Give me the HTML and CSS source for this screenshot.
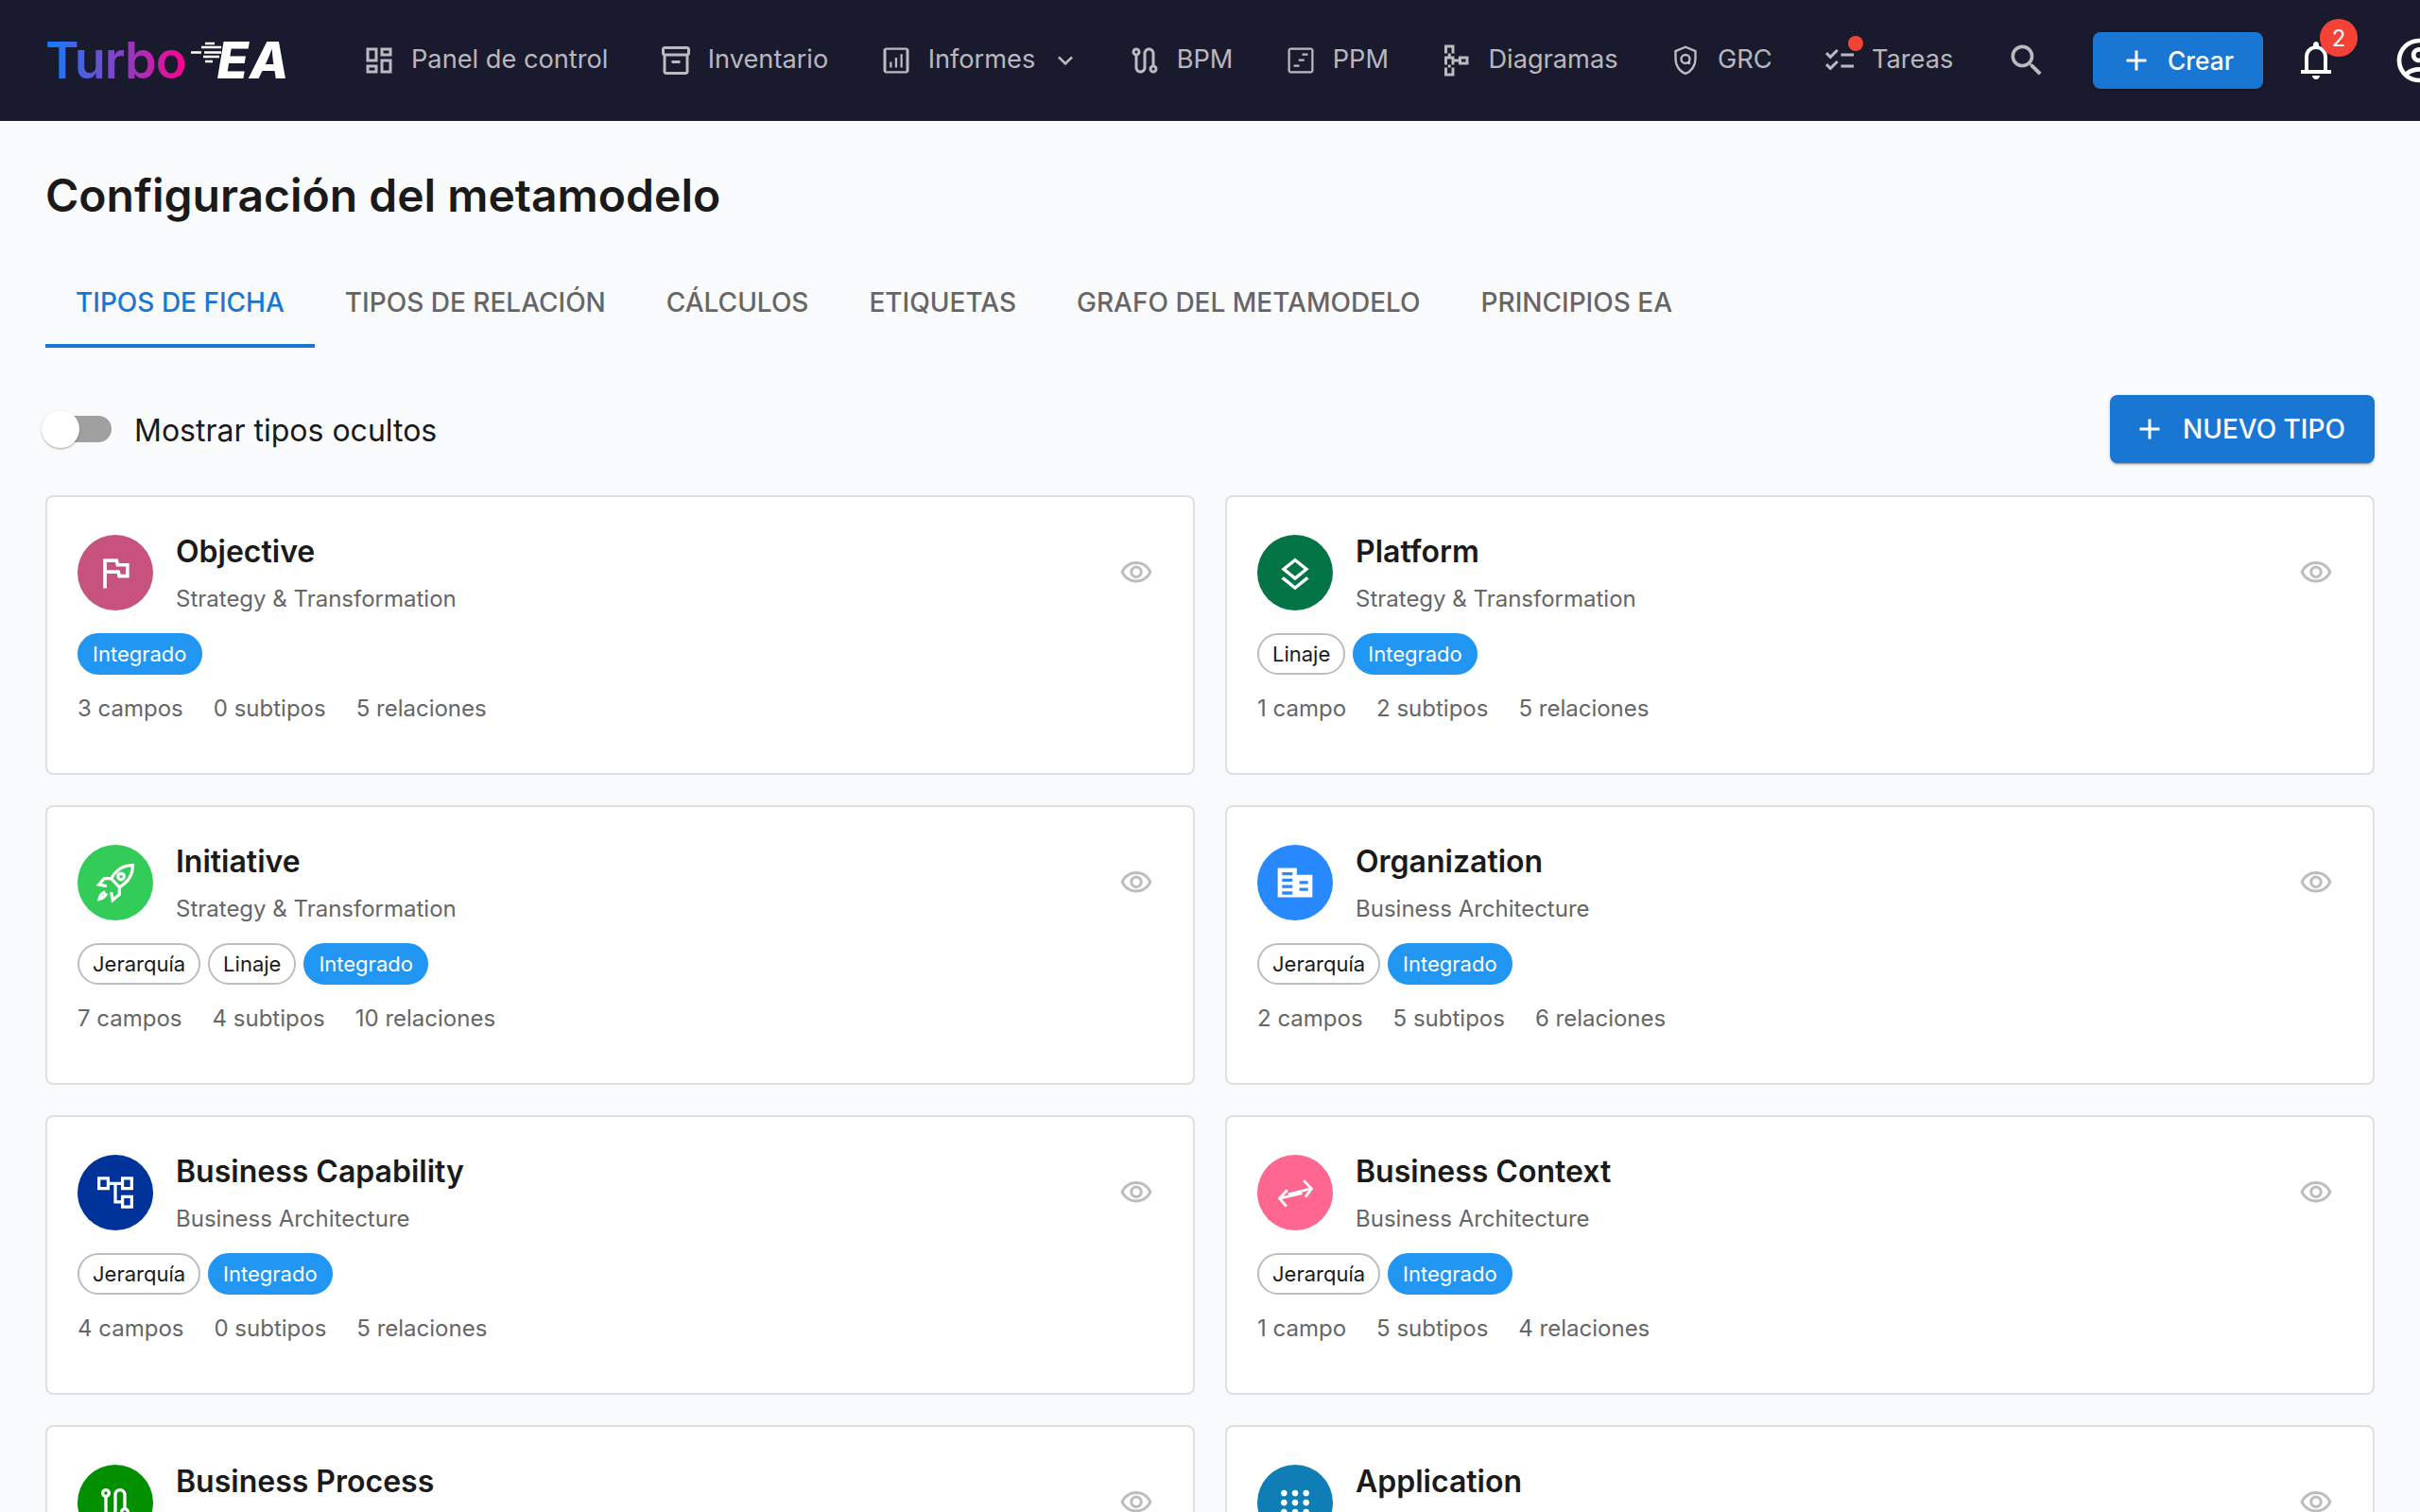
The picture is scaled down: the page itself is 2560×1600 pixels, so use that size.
FILE: index.html
```html
<!DOCTYPE html>
<html lang="es">

<head>
  <meta charset="UTF-8">
  <meta name="viewport" content="width=device-width, initial-scale=1.0">
  <title>Turbo EA - Configuración del metamodelo</title>
  <link rel="stylesheet" href="styles.css">
</head>

<body>
  <header class="topbar">
    <div class="logo">
      <span class="logo-turbo">Turbo</span>
      <span class="logo-ea">
        <svg class="logo-lines" viewBox="0 0 40 40">
          <path d="M15 3h10M11 7h21M0 12.500h11M14 12.500h18M13 17h17M15 22h8" />
        </svg>
        <span class="logo-ea-text">EA</span>
      </span>
    </div>
    <nav class="main-nav">
      <a class="nav-item">
        <svg class="nav-icon" viewBox="0 0 24 24"><path d="M19 5v2h-4V5h4M9 5v6H5V5h4m10 8v6h-4v-6h4M9 17v2H5v-2h4M21 3h-8v6h8V3zM11 3H3v10h8V3zm10 8h-8v10h8V11zm-10 4H3v6h8v-6z" /></svg>
        <span class="nav-label">Panel de control</span>
      </a>
      <a class="nav-item">
        <svg class="nav-icon" viewBox="0 0 24 24"><path d="M20 2H4c-1 0-2 .9-2 2v3.010c0 .72.43 1.340 1 1.690V20c0 1.100 1.100 2 2 2h14c.9 0 2-.9 2-2V8.700c.57-.35 1-.97 1-1.690V4c0-1.100-1-2-2-2zm-1 18H5V9h14v11zm1-13H4V4h16v3zM9 12h6v2H9z" /></svg>
        <span class="nav-label">Inventario</span>
      </a>
      <a class="nav-item nav-item-menu">
        <svg class="nav-icon" viewBox="0 0 24 24"><path d="M19 3H5c-1.100 0-2 .9-2 2v14c0 1.100.9 2 2 2h14c1.100 0 2-.9 2-2V5c0-1.100-.9-2-2-2zm0 16.500H5V4.500h14zM7.500 13H9v4H7.500zM11.200 10h1.500v7h-1.500zM15 7.500h1.500V17H15z" /></svg>
        <span class="nav-label">Informes</span>
        <svg class="nav-chevron" viewBox="0 0 24 24"><path d="M16.590 8.590 12 13.170 7.410 8.590 6 10l6 6 6-6z" /></svg>
      </a>
      <a class="nav-item">
        <svg class="nav-icon" viewBox="0 0 24 24"><path d="M19 15.180V7c0-2.210-1.790-4-4-4s-4 1.790-4 4v10c0 1.100-.9 2-2 2s-2-.9-2-2V8.820C8.160 8.400 9 7.300 9 6c0-1.660-1.340-3-3-3S3 4.340 3 6c0 1.300.84 2.400 2 2.820V17c0 2.210 1.790 4 4 4s4-1.790 4-4V7c0-1.100.9-2 2-2s2 .9 2 2v8.180c-1.160.41-2 1.510-2 2.820 0 1.660 1.340 3 3 3s3-1.340 3-3c0-1.300-.84-2.400-2-2.820zM6 7c-.55 0-1-.45-1-1s.45-1 1-1 1 .45 1 1-.45 1-1 1zm12 12c-.55 0-1-.45-1-1s.45-1 1-1 1 .45 1 1-.45 1-1 1z" /></svg>
        <span class="nav-label">BPM</span>
      </a>
      <a class="nav-item">
        <svg class="nav-icon" viewBox="0 0 24 24"><path d="M19 3H5c-1.100 0-2 .9-2 2v14c0 1.100.9 2 2 2h14c1.100 0 2-.9 2-2V5c0-1.100-.9-2-2-2zm.5 16.500h-15v-15h15zM13 7h4v1.500h-4zM10.500 11h4v1.500h-4zM7 15h4v1.500H7z" /></svg>
        <span class="nav-label">PPM</span>
      </a>
      <a class="nav-item">
        <svg class="nav-icon" viewBox="0 0 24 24"><path d="M14 9v2h-3V9H8.500V7H11V1H4v6h2.500v2H4v6h2.500v2H4v6h7v-6H8.500v-2H11v-2h3v2h7V9h-7zM9 7H6V3h3v4zm0 8H6v-4h3v4zm0 6H6v-4h3v4zm10-8h-3v-2h3v2z" /></svg>
        <span class="nav-label">Diagramas</span>
      </a>
      <a class="nav-item">
        <svg class="nav-icon nav-icon-line" viewBox="0 0 24 24"><path d="M12 2.500 5 5.400V11c0 4.600 2.900 8.800 7 10.300 4.100-1.500 7-5.700 7-10.300V5.400zM15.200 14.500l-1.300-1.300" /><circle cx="12" cy="11" r="3" /></svg>
        <span class="nav-label">GRC</span>
      </a>
      <a class="nav-item nav-item-dot">
        <svg class="nav-icon" viewBox="0 0 24 24"><path d="M22 7h-9v2h9V7zm0 8h-9v2h9v-2zM5.540 11 2 7.460l1.410-1.410 2.120 2.120 4.240-4.240 1.410 1.410L5.540 11zm0 8L2 15.460l1.410-1.410 2.120 2.120 4.240-4.240 1.410 1.410L5.540 19z" /></svg>
        <span class="nav-label">Tareas</span>
      </a>
    </nav>
    <div class="topbar-actions">
      <svg class="search-icon" viewBox="0 0 24 24"><path d="M15.500 14h-.79l-.28-.27C15.410 12.590 16 11.110 16 9.500 16 5.910 13.090 3 9.500 3S3 5.910 3 9.500 5.910 16 9.500 16c1.610 0 3.090-.59 4.230-1.570l.27.28v.79l5 4.990L20.490 19l-4.990-5zm-6 0C7.010 14 5 11.990 5 9.500S7.010 5 9.500 5 14 7.010 14 9.500 11.990 14 9.500 14z" /></svg>
      <button class="create-button">
        <svg class="plus-icon" viewBox="0 0 24 24"><path d="M19 13h-6v6h-2v-6H5v-2h6V5h2v6h6v2z" /></svg>
        Crear
      </button>
      <div class="bell">
        <svg class="bell-icon" viewBox="0 0 24 24"><path d="M4 19v-2h2v-7q0-2.075 1.250-3.688T10.500 4.200v-.7q0-.625.438-1.062T12 2t1.062.438.438 1.062v.7q2 .5 3.250 2.112T18 10v7h2v2zm8 3q-.825 0-1.412-.587T10 20h4q0 .825-.587 1.413T12 22m-4-5h8v-7q0-1.650-1.175-2.825T12 6 9.175 7.175 8 10z" /></svg>
        <span class="bell-badge">2</span>
      </div>
      <svg class="avatar-icon" viewBox="0 0 24 24"><path d="M12 2C6.480 2 2 6.480 2 12s4.480 10 10 10 10-4.480 10-10S17.520 2 12 2zM7.350 18.500C8.660 17.560 10.260 17 12 17s3.340.56 4.650 1.500c-1.310.94-2.910 1.500-4.650 1.500s-3.340-.56-4.650-1.500zm10.790-1.380C16.450 15.800 14.320 15 12 15s-4.450.8-6.140 2.120C4.700 15.730 4 13.950 4 12c0-4.420 3.580-8 8-8s8 3.580 8 8c0 1.950-.7 3.730-1.860 5.120zM12 6c-1.930 0-3.500 1.570-3.500 3.500S10.070 13 12 13s3.500-1.570 3.500-3.500S13.930 6 12 6zm0 5c-.83 0-1.500-.67-1.500-1.500S11.170 8 12 8s1.500.67 1.500 1.500S12.830 11 12 11z" /></svg>
    </div>
  </header>

  <main class="page">
    <h1 class="page-title">Configuración del metamodelo</h1>

    <div class="tabs">
      <a class="tab tab-active">Tipos de ficha</a>
      <a class="tab">Tipos de relación</a>
      <a class="tab">Cálculos</a>
      <a class="tab">Etiquetas</a>
      <a class="tab">Grafo del metamodelo</a>
      <a class="tab">Principios EA</a>
    </div>

    <div class="toolbar">
      <label class="switch-label">
        <span class="switch"><span class="switch-thumb"></span></span>
        <span class="switch-text">Mostrar tipos ocultos</span>
      </label>
      <button class="new-button">
        <svg class="plus-icon" viewBox="0 0 24 24"><path d="M19 13h-6v6h-2v-6H5v-2h6V5h2v6h6v2z" /></svg>
        Nuevo tipo
      </button>
    </div>

    <div class="card-grid">
      <article class="type-card">
        <div class="card-head">
          <span class="type-icon icon-objective">
            <svg viewBox="0 0 24 24"><path d="M5 21V4h8.500l.6 2.500H20V15h-6.500l-.6-2.500H7V21zM7 10.500h7.500l.6 2.500H18V8.500h-5.500L12 6H7z" /></svg>
          </span>
          <div class="card-title">
            <h2>Objective</h2>
            <p>Strategy &amp; Transformation</p>
          </div>
          <svg class="eye-icon" viewBox="0 0 24 24"><path d="M12 6c3.790 0 7.170 2.130 8.820 5.500C19.170 14.870 15.790 17 12 17s-7.170-2.130-8.820-5.500C4.830 8.130 8.210 6 12 6m0-2C7 4 2.730 7.110 1 11.500 2.730 15.890 7 19 12 19s9.270-3.110 11-7.500C21.270 7.110 17 4 12 4zm0 5c1.380 0 2.500 1.120 2.500 2.500S13.380 14 12 14s-2.500-1.120-2.500-2.500S10.620 9 12 9m0-2c-2.480 0-4.500 2.020-4.500 4.500S9.520 16 12 16s4.500-2.020 4.500-4.500S14.480 7 12 7z" /></svg>
        </div>
        <div class="chips"><span class="chip chip-blue">Integrado</span></div>
        <div class="stats"><span>3 campos</span><span>0 subtipos</span><span>5 relaciones</span></div>
      </article>

      <article class="type-card">
        <div class="card-head">
          <span class="type-icon icon-platform">
            <svg viewBox="0 0 24 24"><path d="M12 3.500 20 10l-8 6.500L4 10zM6.900 10l5.100 4.100 5.100-4.100L12 5.900zM5.500 14.300 12 19.600l6.500-5.300 1.500 1.200-8 6.500-8-6.500z" /></svg>
          </span>
          <div class="card-title">
            <h2>Platform</h2>
            <p>Strategy &amp; Transformation</p>
          </div>
          <svg class="eye-icon" viewBox="0 0 24 24"><path d="M12 6c3.790 0 7.170 2.130 8.820 5.500C19.170 14.870 15.790 17 12 17s-7.170-2.130-8.820-5.500C4.830 8.130 8.210 6 12 6m0-2C7 4 2.730 7.110 1 11.500 2.730 15.890 7 19 12 19s9.270-3.110 11-7.500C21.270 7.110 17 4 12 4zm0 5c1.380 0 2.500 1.120 2.500 2.500S13.380 14 12 14s-2.500-1.120-2.500-2.500S10.620 9 12 9m0-2c-2.480 0-4.500 2.020-4.500 4.500S9.520 16 12 16s4.500-2.020 4.500-4.500S14.480 7 12 7z" /></svg>
        </div>
        <div class="chips"><span class="chip">Linaje</span><span class="chip chip-blue">Integrado</span></div>
        <div class="stats"><span>1 campo</span><span>2 subtipos</span><span>5 relaciones</span></div>
      </article>

      <article class="type-card">
        <div class="card-head">
          <span class="type-icon icon-initiative">
            <svg viewBox="0 0 24 24" class="line-art rocket"><path d="M20.500 3.500c-4.500 0-8 2-10.500 6.500l4 4.200c4.500-2.500 6.500-6.500 6.500-10.700zM10 10H6.500L4 13l3.800.7M14 14.200V17.800l-3.300 2.700-.7-3.800M7 16.500c-1.500.5-2.500 2-2.800 3.500 1.500-.3 3-1.300 3.500-2.800" /><circle cx="14.800" cy="9" r="1.500" /></svg>
          </span>
          <div class="card-title">
            <h2>Initiative</h2>
            <p>Strategy &amp; Transformation</p>
          </div>
          <svg class="eye-icon" viewBox="0 0 24 24"><path d="M12 6c3.790 0 7.170 2.130 8.820 5.500C19.170 14.870 15.790 17 12 17s-7.170-2.130-8.820-5.500C4.830 8.130 8.210 6 12 6m0-2C7 4 2.730 7.110 1 11.500 2.730 15.890 7 19 12 19s9.270-3.110 11-7.500C21.270 7.110 17 4 12 4zm0 5c1.380 0 2.500 1.120 2.500 2.500S13.380 14 12 14s-2.500-1.120-2.500-2.500S10.620 9 12 9m0-2c-2.480 0-4.500 2.020-4.500 4.500S9.520 16 12 16s4.500-2.020 4.500-4.500S14.480 7 12 7z" /></svg>
        </div>
        <div class="chips"><span class="chip">Jerarquía</span><span class="chip">Linaje</span><span class="chip chip-blue">Integrado</span></div>
        <div class="stats"><span>7 campos</span><span>4 subtipos</span><span>10 relaciones</span></div>
      </article>

      <article class="type-card">
        <div class="card-head">
          <span class="type-icon icon-organization">
            <svg viewBox="0 0 24 24"><path fill-rule="evenodd" d="M2 3.500h11v4h9v13H2zM4.500 6v1.800h6V6zm0 3.700v1.800h6V9.700zm0 3.700v1.800h6v-1.800zm0 3.700v1.800h6v-1.800zM14.500 11v1.800h5V11zm0 4v1.800h5V15z" /></svg>
          </span>
          <div class="card-title">
            <h2>Organization</h2>
            <p>Business Architecture</p>
          </div>
          <svg class="eye-icon" viewBox="0 0 24 24"><path d="M12 6c3.790 0 7.170 2.130 8.820 5.500C19.170 14.870 15.790 17 12 17s-7.170-2.130-8.820-5.500C4.830 8.130 8.210 6 12 6m0-2C7 4 2.730 7.110 1 11.500 2.730 15.890 7 19 12 19s9.270-3.110 11-7.500C21.270 7.110 17 4 12 4zm0 5c1.380 0 2.500 1.120 2.500 2.500S13.380 14 12 14s-2.500-1.120-2.500-2.500S10.620 9 12 9m0-2c-2.480 0-4.500 2.020-4.500 4.500S9.520 16 12 16s4.500-2.020 4.500-4.500S14.480 7 12 7z" /></svg>
        </div>
        <div class="chips"><span class="chip">Jerarquía</span><span class="chip chip-blue">Integrado</span></div>
        <div class="stats"><span>2 campos</span><span>5 subtipos</span><span>6 relaciones</span></div>
      </article>

      <article class="type-card">
        <div class="card-head">
          <span class="type-icon icon-capability">
            <svg viewBox="0 0 24 24" class="line-art capability"><path d="M4 5h4.500v5H4zM15.500 5H20v5h-4.500zM15.500 14H20v5h-4.500zM8.500 7.500h7M12 7.500v9h3.500" /></svg>
          </span>
          <div class="card-title">
            <h2>Business Capability</h2>
            <p>Business Architecture</p>
          </div>
          <svg class="eye-icon" viewBox="0 0 24 24"><path d="M12 6c3.790 0 7.170 2.130 8.820 5.500C19.170 14.870 15.790 17 12 17s-7.170-2.130-8.820-5.500C4.830 8.130 8.210 6 12 6m0-2C7 4 2.730 7.110 1 11.500 2.730 15.890 7 19 12 19s9.270-3.110 11-7.500C21.270 7.110 17 4 12 4zm0 5c1.380 0 2.500 1.120 2.500 2.500S13.380 14 12 14s-2.500-1.120-2.500-2.500S10.620 9 12 9m0-2c-2.480 0-4.500 2.020-4.500 4.500S9.520 16 12 16s4.500-2.020 4.500-4.500S14.480 7 12 7z" /></svg>
        </div>
        <div class="chips"><span class="chip">Jerarquía</span><span class="chip chip-blue">Integrado</span></div>
        <div class="stats"><span>4 campos</span><span>0 subtipos</span><span>5 relaciones</span></div>
      </article>

      <article class="type-card">
        <div class="card-head">
          <span class="type-icon icon-context">
            <svg viewBox="0 0 24 24" class="line-art"><path d="M8 13 21.500 9.700M17 5l4.500 4.700L18 14.500M16 12.300 3 15.300M7.500 10.500 3 15.300 7 20" /></svg>
          </span>
          <div class="card-title">
            <h2>Business Context</h2>
            <p>Business Architecture</p>
          </div>
          <svg class="eye-icon" viewBox="0 0 24 24"><path d="M12 6c3.790 0 7.170 2.130 8.820 5.500C19.170 14.870 15.790 17 12 17s-7.170-2.130-8.820-5.500C4.830 8.130 8.210 6 12 6m0-2C7 4 2.730 7.110 1 11.500 2.730 15.890 7 19 12 19s9.270-3.110 11-7.500C21.270 7.110 17 4 12 4zm0 5c1.380 0 2.500 1.120 2.500 2.500S13.380 14 12 14s-2.500-1.120-2.500-2.500S10.620 9 12 9m0-2c-2.480 0-4.500 2.020-4.500 4.500S9.520 16 12 16s4.500-2.020 4.500-4.500S14.480 7 12 7z" /></svg>
        </div>
        <div class="chips"><span class="chip">Jerarquía</span><span class="chip chip-blue">Integrado</span></div>
        <div class="stats"><span>1 campo</span><span>5 subtipos</span><span>4 relaciones</span></div>
      </article>

      <article class="type-card">
        <div class="card-head">
          <span class="type-icon icon-process">
            <svg class="small" viewBox="0 0 24 24"><path d="M19 15.180V7c0-2.210-1.790-4-4-4s-4 1.790-4 4v10c0 1.100-.9 2-2 2s-2-.9-2-2V8.820C8.160 8.400 9 7.300 9 6c0-1.660-1.340-3-3-3S3 4.340 3 6c0 1.300.84 2.400 2 2.820V17c0 2.210 1.790 4 4 4s4-1.790 4-4V7c0-1.100.9-2 2-2s2 .9 2 2v8.180c-1.160.41-2 1.510-2 2.820 0 1.660 1.340 3 3 3s3-1.340 3-3c0-1.300-.84-2.400-2-2.820zM6 7c-.55 0-1-.45-1-1s.45-1 1-1 1 .45 1 1-.45 1-1 1zm12 12c-.55 0-1-.45-1-1s.45-1 1-1 1 .45 1 1-.45 1-1 1z" /></svg>
          </span>
          <div class="card-title">
            <h2>Business Process</h2>
          </div>
          <svg class="eye-icon" viewBox="0 0 24 24"><path d="M12 6c3.790 0 7.170 2.130 8.820 5.500C19.170 14.870 15.790 17 12 17s-7.170-2.130-8.820-5.500C4.830 8.130 8.210 6 12 6m0-2C7 4 2.730 7.110 1 11.500 2.730 15.890 7 19 12 19s9.270-3.110 11-7.500C21.270 7.110 17 4 12 4zm0 5c1.380 0 2.500 1.120 2.500 2.500S13.380 14 12 14s-2.500-1.120-2.500-2.500S10.620 9 12 9m0-2c-2.480 0-4.500 2.020-4.500 4.500S9.520 16 12 16s4.500-2.020 4.500-4.500S14.480 7 12 7z" /></svg>
        </div>
      </article>

      <article class="type-card">
        <div class="card-head">
          <span class="type-icon icon-application">
            <svg class="small" viewBox="0 0 24 24"><path d="M7 6a2 2 0 1 0 0 .01zM14 6a2 2 0 1 0 0 .01zM21 6a2 2 0 1 0 0 .01zM7 12a2 2 0 1 0 0 .01zM14 12a2 2 0 1 0 0 .01zM21 12a2 2 0 1 0 0 .01zM7 18a2 2 0 1 0 0 .01zM14 18a2 2 0 1 0 0 .01zM21 18a2 2 0 1 0 0 .01z" /></svg>
          </span>
          <div class="card-title">
            <h2>Application</h2>
          </div>
          <svg class="eye-icon" viewBox="0 0 24 24"><path d="M12 6c3.790 0 7.170 2.130 8.820 5.500C19.170 14.870 15.790 17 12 17s-7.170-2.130-8.820-5.500C4.830 8.130 8.210 6 12 6m0-2C7 4 2.730 7.110 1 11.500 2.730 15.890 7 19 12 19s9.270-3.110 11-7.500C21.270 7.110 17 4 12 4zm0 5c1.380 0 2.500 1.120 2.500 2.500S13.380 14 12 14s-2.500-1.120-2.500-2.500S10.620 9 12 9m0-2c-2.480 0-4.500 2.020-4.500 4.500S9.520 16 12 16s4.500-2.020 4.500-4.500S14.480 7 12 7z" /></svg>
        </div>
      </article>
    </div>
  </main>
</body>

</html>
```

FILE: styles.css
```css
* {
  margin: 0;
  padding: 0;
  box-sizing: border-box;
}

html,
body {
  height: 1600px;
  overflow: hidden;
}

body {
  font-family: Inter, "Noto Sans", sans-serif;
  background-color: #fafbfd;
  color: #1a1a1a;
}

svg {
  fill: currentColor;
  flex-shrink: 0;
}

/* top bar */
.topbar {
  height: 128px;
  background-color: #1a1a2e;
  display: flex;
  align-items: center;
  padding-left: 48px;
  overflow: hidden;
}

.logo {
  display: flex;
  align-items: center;
  width: 311px;
  flex-shrink: 0;
}

.logo-turbo {
  font-size: 54px;
  font-weight: 600;
  line-height: 1;
  letter-spacing: -1px;
  background: linear-gradient(90deg, #0f7fff, #8a3fc0 55%, #ff0090);
  -webkit-background-clip: text;
  background-clip: text;
  color: transparent;
}

.logo-ea {
  position: relative;
  margin-left: 33px;
}

.logo-lines {
  position: absolute;
  left: -28px;
  top: 6px;
  width: 40px;
  height: 40px;
  fill: none;
  stroke: #fff;
  stroke-width: 2.5;
}

.logo-ea-text {
  color: #fff;
  font-size: 54px;
  font-weight: 800;
  font-style: italic;
  line-height: 1;
  letter-spacing: 1px;
}

.main-nav {
  display: flex;
  align-items: center;
  gap: 5.4px;
  flex-shrink: 0;
}

.nav-item {
  position: relative;
  display: flex;
  align-items: center;
  gap: 16px;
  padding: 0 24px;
  color: rgba(255, 255, 255, 0.7);
  font-size: 27.2px;
  white-space: nowrap;
}

.nav-item-menu {
  padding-right: 20px;
}

.nav-label {
  margin-top: -3px;
}

.nav-icon {
  width: 36px;
  height: 36px;
}

.nav-icon-line {
  fill: none;
  stroke: currentColor;
  stroke-width: 1.6;
}

.nav-chevron {
  width: 32px;
  height: 32px;
}

.nav-item-dot::after {
  content: "";
  position: absolute;
  left: 51px;
  top: -8px;
  width: 16px;
  height: 16px;
  border-radius: 50%;
  background-color: #f44336;
}

.topbar-actions {
  display: flex;
  align-items: center;
  color: #fff;
  margin-left: auto;
  margin-right: -27px;
  flex-shrink: 0;
}

.search-icon {
  width: 44px;
  height: 44px;
  color: rgba(255, 255, 255, 0.7);
}

.create-button {
  display: flex;
  align-items: center;
  gap: 15px;
  width: 180px;
  height: 60px;
  margin-left: 48px;
  padding-left: 28px;
  border: none;
  border-radius: 8px;
  background-color: #1976d2;
  color: #fff;
  font-family: inherit;
  font-size: 26.4px;
  font-weight: 500;
  box-shadow: 0 2px 4px rgba(0, 0, 0, 0.25);
}

.plus-icon {
  width: 36px;
  height: 36px;
}

.bell {
  position: relative;
  width: 48px;
  height: 48px;
  margin-left: 32px;
}

.bell-icon {
  width: 48px;
  height: 48px;
}

.bell-badge {
  position: absolute;
  left: 28px;
  top: -20px;
  width: 40px;
  height: 40px;
  border-radius: 50%;
  background-color: #f44336;
  color: #fff;
  font-size: 24px;
  display: flex;
  align-items: center;
  justify-content: center;
}

.avatar-icon {
  width: 56px;
  height: 56px;
  margin-left: 57px;
}

/* page */
.page {
  padding: 0 48px;
}

.page-title {
  padding-top: 50px;
  font-size: 48px;
  font-weight: 600;
  line-height: 1.2;
  color: #1a1a1a;
}

.tabs {
  display: flex;
  margin-top: 36px;
}

.tab {
  height: 96px;
  display: flex;
  align-items: center;
  padding: 0 32px;
  font-size: 28px;
  font-weight: 500;
  text-transform: uppercase;
  color: #666;
  white-space: nowrap;
}

.tab-active {
  color: #1976d2;
  box-shadow: inset 0 -4px 0 #1976d2;
}

.toolbar {
  display: flex;
  align-items: center;
  justify-content: space-between;
  margin-top: 50px;
}

.switch-label {
  display: flex;
  align-items: center;
  gap: 24px;
  font-size: 32px;
}

.switch-text {
  margin-top: 3px;
}

.switch {
  position: relative;
  display: block;
  width: 68px;
  height: 28px;
  margin-left: 2px;
  border-radius: 14px;
  background-color: #a0a0a0;
}

.switch-thumb {
  position: absolute;
  left: -6px;
  top: -6px;
  width: 40px;
  height: 40px;
  border-radius: 50%;
  background-color: #fff;
  box-shadow: 0 2px 2px -1px rgba(0, 0, 0, 0.2), 0 1px 3px rgba(0, 0, 0, 0.2);
}

.new-button {
  display: flex;
  align-items: center;
  gap: 17px;
  width: 280px;
  height: 72px;
  padding-left: 24px;
  border: none;
  border-radius: 8px;
  background-color: #1976d2;
  color: #fff;
  font-family: inherit;
  font-size: 28px;
  font-weight: 500;
  text-transform: uppercase;
  box-shadow: 0 3px 1px -2px rgba(0, 0, 0, 0.2), 0 2px 2px rgba(0, 0, 0, 0.14), 0 1px 5px rgba(0, 0, 0, 0.12);
}

.card-grid {
  display: grid;
  grid-template-columns: 1fr 1fr;
  gap: 32px;
  margin-top: 34px;
}

.type-card {
  height: 296px;
  padding: 40px 32px 0;
  background-color: #fff;
  border: 2px solid #e0e0e0;
  border-radius: 8px;
}

.card-head {
  display: flex;
  align-items: flex-start;
}

.type-icon {
  width: 80px;
  height: 80px;
  border-radius: 50%;
  color: #fff;
  display: flex;
  align-items: center;
  justify-content: center;
  flex-shrink: 0;
}

.type-icon svg {
  width: 44px;
  height: 44px;
}

.type-icon svg.small {
  width: 40px;
  height: 40px;
}

.type-icon .line-art {
  fill: none;
  stroke: currentColor;
  stroke-width: 1.5;
}

.type-icon .rocket,
.type-icon .capability {
  width: 52px;
  height: 52px;
}

.icon-objective { background-color: #c7527d; }
.icon-platform { background-color: #027446; }
.icon-initiative { background-color: #33cc58; }
.icon-organization { background-color: #2889ff; }
.icon-capability { background-color: #003399; }
.icon-context { background-color: #ff6690; }
.icon-process { background-color: #028f00; }
.icon-application { background-color: #0f7eb5; }

.card-title {
  flex: 1;
  margin-left: 24px;
}

.card-title h2 {
  margin-top: -2px;
  font-size: 32px;
  font-weight: 600;
  line-height: 40px;
  color: #1a1a1a;
}

.card-title p {
  margin-top: 14px;
  font-size: 24px;
  line-height: 32px;
  color: #666;
}

.eye-icon {
  width: 36px;
  height: 36px;
  margin: 22px 10px 0 0;
  color: #bdbdbd;
}

.chips {
  display: flex;
  gap: 8px;
  margin-top: 20px;
}

.chip {
  height: 44px;
  padding: 0 14px;
  display: flex;
  align-items: center;
  border: 2px solid #bdbdbd;
  border-radius: 22px;
  font-size: 22px;
  color: #1a1a1a;
}

.chip-blue {
  background-color: #2196f3;
  border-color: #2196f3;
  color: #fff;
}

.stats {
  display: flex;
  gap: 32px;
  margin-top: 20px;
  font-size: 24px;
  line-height: 32px;
  color: #666;
}
```
